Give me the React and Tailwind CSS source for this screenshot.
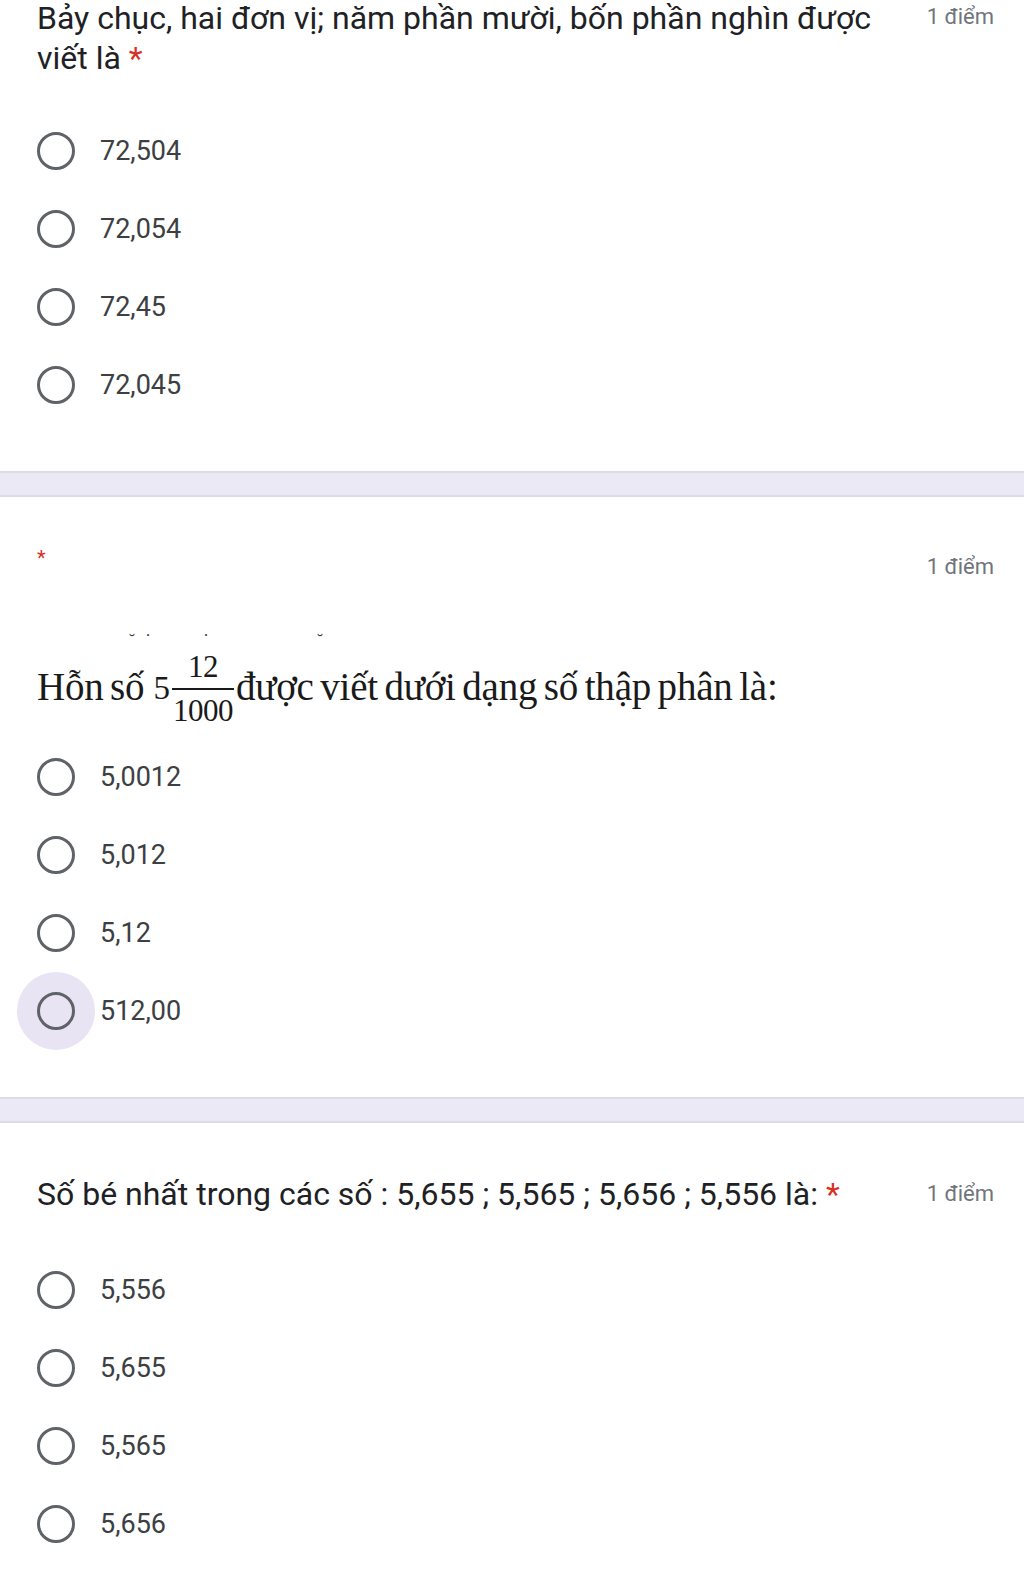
import React from "react";

const roboto = { fontFamily: "Roboto, 'Noto Sans', Arial, sans-serif" };
const serif = { fontFamily: "'Liberation Serif', 'Times New Roman', serif" };

function Radio({ label, hover }) {
  return (
    <div className="flex h-[78px] items-center pl-[37px]">
      <div className="relative flex h-[38px] w-[38px] items-center justify-center">
        {hover && (
          <div className="absolute left-[-20px] top-[-20px] h-[78px] w-[78px] rounded-full bg-[#e9e4f4]" />
        )}
        <div className="relative h-[38px] w-[38px] rounded-full border-[3px] border-[#5f6368]" />
      </div>
      <span className="ml-[25px] text-[27px] leading-none text-[#3c4043]">{label}</span>
    </div>
  );
}

function Points({ className = "" }) {
  return (
    <span className={"shrink-0 whitespace-nowrap text-[22px] leading-none text-[#70757a] " + className}>
      1 điểm
    </span>
  );
}

function Divider() {
  return <div className="h-[26px] w-full border-y-2 border-[#dedbe6] bg-[#ece9f6]" />;
}

export default function App() {
  return (
    <div className="w-[1024px] bg-white" style={roboto}>
      {/* Question 1 */}
      <div className="flex items-start justify-between pl-[37px] pr-[30px]">
        <div className="mt-[-2px] text-[32px] leading-[40px] text-[#202124]">
          Bảy chục, hai đơn vị; năm phần mười, bốn phần nghìn được
          <br />
          viết là <span className="text-[#d93025]">*</span>
        </div>
        <Points className="mt-[6px]" />
      </div>
      <div className="mt-[34px]">
        {["72,504", "72,054", "72,45", "72,045"].map((o) => (
          <Radio key={o} label={o} />
        ))}
      </div>
      <div className="mt-[47px]">
        <Divider />
      </div>

      {/* Question 2 */}
      <div className="flex items-start justify-between pl-[37px] pr-[30px] pt-[51px]">
        <span className="text-[20px] leading-none text-[#d93025]">*</span>
        <Points className="mt-[8px]" />
      </div>
      <div className="mt-[54px] pl-[37px] text-[#1a1a1a]" style={serif}>
        <div className="flex h-[20px] items-start text-[18px] leading-none text-[#333]">
          <span className="ml-[92px]">˘</span>
          <span className="ml-[10px]">˙</span>
          <span className="ml-[52px]">˙</span>
          <span className="ml-[108px]">˘</span>
        </div>
        <div className="flex items-start">
          <span className="mt-[15px] whitespace-nowrap text-[39px] leading-[39px] tracking-[-0.2px] [word-spacing:-3px]">
            Hỗn số
          </span>
          <span className="ml-[9px] mt-[20px] text-[33px] leading-[33px]">5</span>
          <span className="ml-[2px] flex flex-col items-center text-[31px] leading-[30px] tracking-[-0.5px]">
            <span>12</span>
            <span className="my-[6px] h-[2px] w-[62px] bg-[#1a1a1a]" />
            <span>1000</span>
          </span>
          <span className="ml-[2px] mt-[15px] whitespace-nowrap text-[39px] leading-[39px] tracking-[-0.2px] [word-spacing:-3px]">
            được viết dưới dạng số thập phân là:
          </span>
        </div>
      </div>
      <div className="mt-[12px]">
        <Radio label="5,0012" />
        <Radio label="5,012" />
        <Radio label="5,12" />
        <Radio label="512,00" hover />
      </div>
      <div className="mt-[47px]">
        <Divider />
      </div>

      {/* Question 3 */}
      <div className="flex items-center justify-between pl-[37px] pr-[30px] pt-[51px]">
        <div className="text-[32px] leading-[40px] text-[#202124]">
          Số bé nhất trong các số : 5,655 ; 5,565 ; 5,656 ; 5,556 là:{" "}
          <span className="text-[#d93025]">*</span>
        </div>
        <Points />
      </div>
      <div className="mt-[37px] pb-[22px]">
        {["5,556", "5,655", "5,565", "5,656"].map((o) => (
          <Radio key={o} label={o} />
        ))}
      </div>
    </div>
  );
}
